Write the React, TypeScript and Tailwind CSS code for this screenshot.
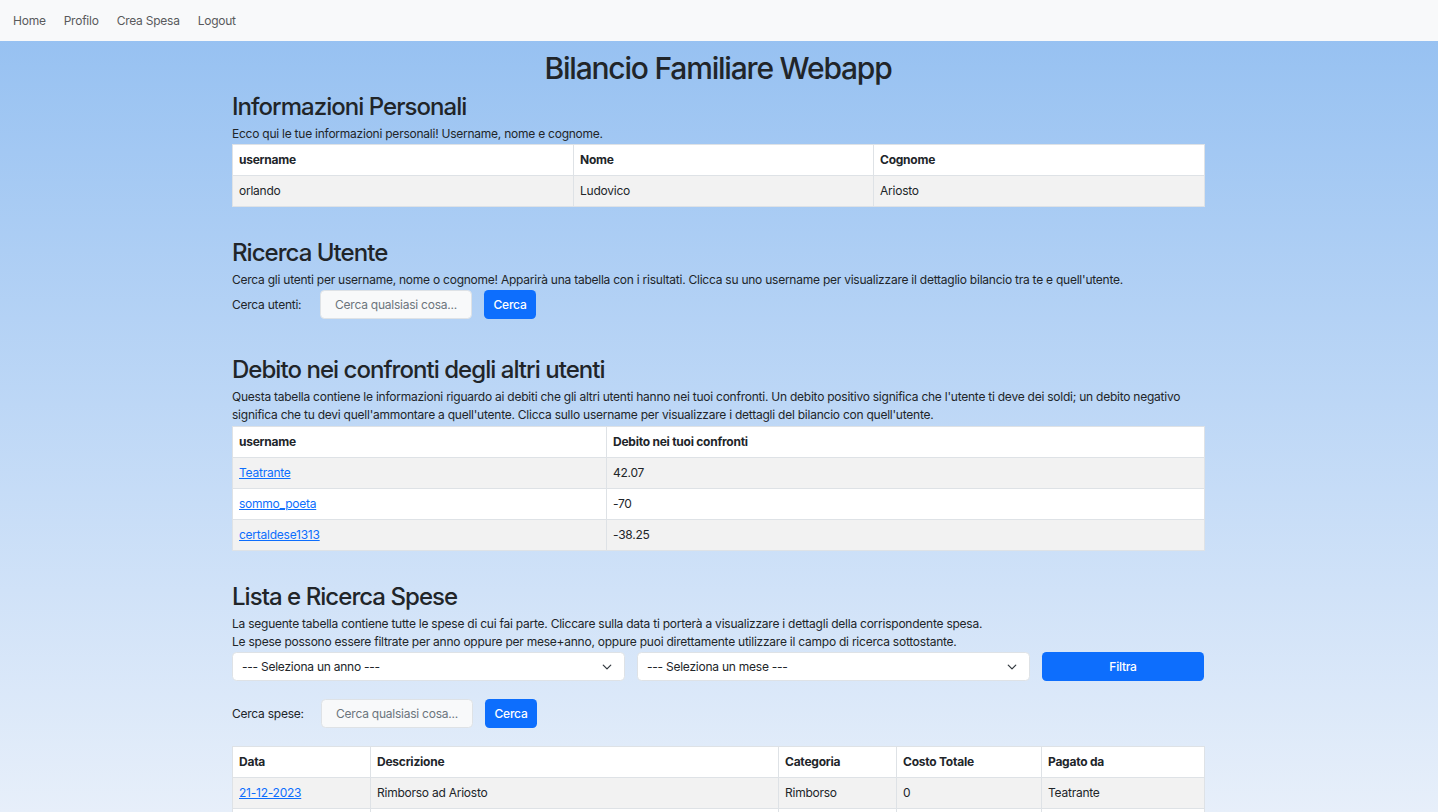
import React from 'react';

const font = { fontFamily: 'Inter, "Noto Sans", sans-serif' };

function Chevron() {
  return (
    <svg width="10" height="10" viewBox="0 0 16 16" fill="none" stroke="#343a40" strokeWidth="2" strokeLinecap="round" strokeLinejoin="round">
      <path d="m2 5 6 6 6-6" />
    </svg>
  );
}

function SearchRow({ label, labelWidth }: { label: string; labelWidth: string }) {
  return (
    <div className="flex items-center h-[29px]">
      <span className={`${labelWidth} text-[12px]`}>{label}</span>
      <div className="w-[152px] h-[29px] rounded-[4.5px] border border-[#dee2e6] bg-[#f8f9fa] flex items-center justify-center text-[12px] text-[#6c757d]">
        Cerca qualsiasi cosa...
      </div>
      <button className="ml-[12px] w-[52px] h-[29px] rounded-[4.5px] bg-[#0d6efd] text-white text-[12px] font-medium">
        Cerca
      </button>
    </div>
  );
}

function Table({ cols, head, rows }: { cols: string[]; head: string[]; rows: (string | { link: string })[][] }) {
  return (
    <table className="w-full border-collapse text-[12px] table-fixed">
      <colgroup>
        {cols.map((c, i) => (
          <col key={i} style={{ width: c }} />
        ))}
      </colgroup>
      <thead>
        <tr className="bg-white">
          {head.map((h) => (
            <th key={h} className="border border-[#dee2e6] h-[31px] px-[6px] text-left font-bold">{h}</th>
          ))}
        </tr>
      </thead>
      <tbody>
        {rows.map((r, i) => (
          <tr key={i} className={i % 2 === 0 ? 'bg-[#f2f2f2]' : 'bg-white'}>
            {r.map((c, j) => (
              <td key={j} className="border border-[#dee2e6] h-[31px] px-[6px]">
                {typeof c === 'string' ? c : <a className="text-[#0d6efd] underline" href="#">{c.link}</a>}
              </td>
            ))}
          </tr>
        ))}
      </tbody>
    </table>
  );
}

export default function App() {
  return (
    <div className="min-h-screen bg-fixed bg-linear-to-b from-[#93bff1] to-[#e7effa] text-[#212529] tracking-[-0.015em]" style={font}>
      <nav className="h-[41px] bg-[#f8f9fa] flex items-center pl-[13px] gap-[18px] text-[12px] text-[#595a5c]">
        <a href="#">Home</a>
        <a href="#">Profilo</a>
        <a href="#">Crea Spesa</a>
        <a href="#">Logout</a>
      </nav>

      <main className="w-[974px] pr-[2px] mx-auto pt-[9px] pb-10">
        <h1 className="text-center text-[30px] leading-[36px] font-medium tracking-[-0.04em] mb-[6px]">Bilancio Familiare Webapp</h1>

        <h2 className="text-[24px] leading-[29px] font-medium tracking-[-0.04em] mb-[4px]">Informazioni Personali</h2>
        <p className="text-[12px] leading-[18px] mb-[1px]">Ecco qui le tue informazioni personali! Username, nome e cognome.</p>
        <Table
          cols={['341px', '300px', '331px']}
          head={['username', 'Nome', 'Cognome']}
          rows={[['orlando', 'Ludovico', 'Ariosto']]}
        />

        <h2 className="text-[24px] leading-[29px] font-medium tracking-[-0.04em] mt-[31px] mb-[4px]">Ricerca Utente</h2>
        <p className="text-[12px] leading-[18px] mb-[1px]">
          Cerca gli utenti per username, nome o cognome! Apparirà una tabella con i risultati. Clicca su uno username per visualizzare il dettaglio bilancio tra te e quell'utente.
        </p>
        <SearchRow label="Cerca utenti:" labelWidth="w-[88px]" />

        <h2 className="text-[24px] leading-[29px] font-medium tracking-[-0.04em] mt-[36px] mb-[4px]">Debito nei confronti degli altri utenti</h2>
        <p className="text-[12px] leading-[18px] mb-[2px]">
          Questa tabella contiene le informazioni riguardo ai debiti che gli altri utenti hanno nei tuoi confronti. Un debito positivo significa che l'utente ti deve dei soldi; un debito negativo significa che tu devi quell'ammontare a quell'utente. Clicca sullo username per visualizzare i dettagli del bilancio con quell'utente.
        </p>
        <Table
          cols={['374px', '598px']}
          head={['username', 'Debito nei tuoi confronti']}
          rows={[
            [{ link: 'Teatrante' }, '42.07'],
            [{ link: 'sommo_poeta' }, '-70'],
            [{ link: 'certaldese1313' }, '-38.25'],
          ]}
        />

        <h2 className="text-[24px] leading-[29px] font-medium tracking-[-0.04em] mt-[31px] mb-[4px]">Lista e Ricerca Spese</h2>
        <p className="text-[12px] leading-[18px] mb-[1px]">
          La seguente tabella contiene tutte le spese di cui fai parte. Cliccare sulla data ti porterà a visualizzare i dettagli della corrispondente spesa.
          <br />
          Le spese possono essere filtrate per anno oppure per mese+anno, oppure puoi direttamente utilizzare il campo di ricerca sottostante.
        </p>
        <div className="grid grid-cols-[393px_393px_162px] gap-[12px]">
          <div className="h-[29px] rounded-[4.5px] border border-[#dee2e6] bg-white flex items-center justify-between pl-[9px] pr-[12px] text-[12px]">
            <span>--- Seleziona un anno ---</span>
            <Chevron />
          </div>
          <div className="h-[29px] rounded-[4.5px] border border-[#dee2e6] bg-white flex items-center justify-between pl-[9px] pr-[12px] text-[12px]">
            <span>--- Seleziona un mese ---</span>
            <Chevron />
          </div>
          <button className="h-[29px] rounded-[4.5px] bg-[#0d6efd] text-white text-[12px] font-medium">Filtra</button>
        </div>

        <div className="mt-[18px] mb-[18px]">
          <SearchRow label="Cerca spese:" labelWidth="w-[89px]" />
        </div>

        <Table
          cols={['138px', '408px', '118px', '145px', '163px']}
          head={['Data', 'Descrizione', 'Categoria', 'Costo Totale', 'Pagato da']}
          rows={[
            [{ link: '21-12-2023' }, 'Rimborso ad Ariosto', 'Rimborso', '0', 'Teatrante'],
            [{ link: '20-12-2023' }, 'Cena di Natale', 'Cibo', '120', 'orlando'],
          ]}
        />
      </main>
    </div>
  );
}
